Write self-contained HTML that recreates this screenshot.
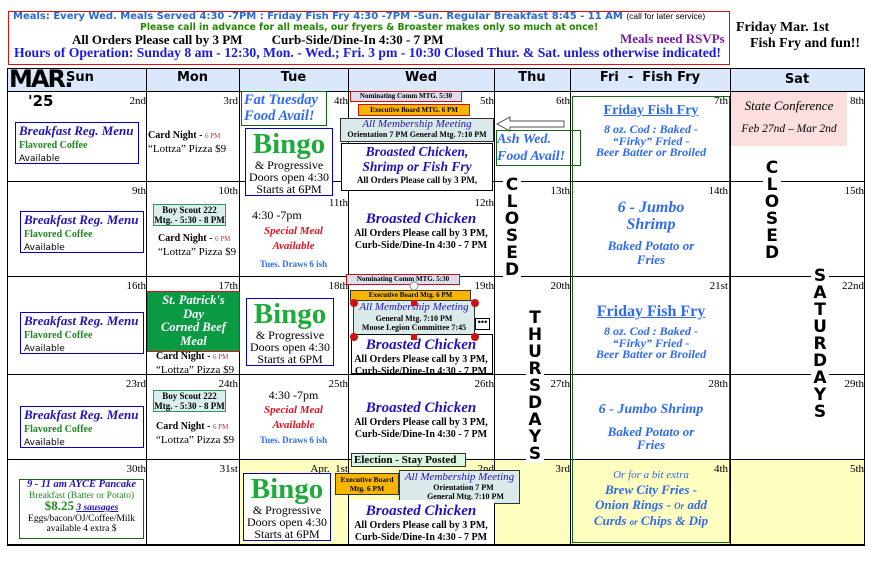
<!DOCTYPE html>
<html><head><meta charset="utf-8"><style>
*{margin:0;padding:0;box-sizing:border-box}
body{width:879px;height:571px;background:#fff;position:relative;overflow:hidden;font-family:"Liberation Serif",serif}
.a{position:absolute}
.c{text-align:center;white-space:nowrap}
.s{font-family:"DejaVu Sans","Liberation Sans",sans-serif}
.hl{position:absolute;height:1px;background:#000}
.vl{position:absolute;width:1px;background:#000}
.hd{position:absolute;top:68px;height:23px;background:#dbe8fb;font:bold 13px "DejaVu Sans",sans-serif;text-align:center;line-height:20px}
.dn{position:absolute;font-size:11px;width:60px;text-align:right}
.bm{position:absolute;border:1px solid #0000cc;background:#fff;padding:1px 3px;line-height:11px}
.bm b.t{font:italic bold 13px "Liberation Serif",serif;color:#2211bb;display:block;line-height:14px}
.bm .g{color:#228822;font:bold 10px "Liberation Serif",serif}
.bm .k{font:9px "DejaVu Sans",sans-serif}
.cn{position:absolute;font-size:10px;font-weight:bold;line-height:13px}
.cn small{font-size:7px;color:#c33;font-weight:normal}
.cn span{font-weight:normal;font-size:11px}
.bingo{position:absolute;border:1px solid #0000cc;background:#fff;text-align:center;line-height:12px;font-size:12px}
.bingo b{display:block;color:#1faa3c;font-size:29px;line-height:30px}
.bc{position:absolute;text-align:center;width:146px;font-size:10px;font-weight:bold;line-height:12px}
.bc i{display:block;color:#2211bb;font-size:15px;line-height:17px}
.v{position:absolute;font:900 17px "DejaVu Sans",sans-serif;line-height:17px;width:18px;text-align:center;background:#fff}
.fb{color:#2f6bf0;font-weight:bold;font-style:italic;text-align:center;position:absolute;width:158px}
</style></head><body>
<!-- top box -->
<div class="a" style="left:8px;top:11px;width:722px;height:54px;border:1px solid #d11"></div>
<div class="a s" style="left:13px;top:11px;font-size:10px;font-weight:bold;color:#2a6ad0;white-space:nowrap">Meals: Every Wed. Meals Served 4:30 -7PM : Friday Fish Fry 4:30 -7PM -Sun. Regular Breakfast 8:45 - 11 AM <span style="font-weight:normal;color:#000;font-family:'Liberation Sans';font-size:8.5px">(call for later service)</span></div>
<div class="a s" style="left:140px;top:22px;font-size:9.3px;font-weight:bold;color:#228800;white-space:nowrap">Please call in advance for all meals, our fryers &amp; Broaster makes only so much at once!</div>
<div class="a" style="left:72px;top:32px;font-size:13px;font-weight:bold;white-space:nowrap">All Orders Please call by 3 PM&nbsp;&nbsp;&nbsp;&nbsp;&nbsp;&nbsp;&nbsp;&nbsp;&nbsp;Curb-Side/Dine-In 4:30 - 7 PM</div>
<div class="a" style="left:620px;top:31px;font-size:13px;font-weight:bold;color:#7a1aa0">Meals need RSVPs</div>
<div class="a" style="left:14px;top:45px;font-size:13.7px;font-weight:bold;color:#1a1ae0;white-space:nowrap">Hours of Operation: Sunday 8 am - 12:30, Mon. - Wed.; Fri. 3 pm - 10:30 Closed Thur. &amp; Sat. unless otherwise indicated!</div>
<div class="a" style="left:736px;top:20px;font-size:14px;font-weight:bold">Friday Mar. 1st</div>
<div class="a" style="left:750px;top:36px;font-size:14px;font-weight:bold">Fish Fry and fun!!</div>

<!-- yellow last row -->
<div class="a" style="left:239px;top:459px;width:625px;height:86px;background:#ffffc0"></div>
<!-- headers -->
<div class="hd" style="left:8px;width:138px;text-align:left;padding-left:58px">Sun</div>
<div class="hd" style="left:146px;width:93px">Mon</div>
<div class="hd" style="left:239px;width:109px">Tue</div>
<div class="hd" style="left:348px;width:146px">Wed</div>
<div class="hd" style="left:494px;width:76px">Thu</div>
<div class="hd" style="left:570px;width:160px">Fri &nbsp;- &nbsp;Fish Fry</div>
<div class="hd" style="left:730px;width:134px;line-height:23px">Sat</div>
<div class="a s" style="left:9px;top:66px;font:900 24px 'DejaVu Sans',sans-serif;letter-spacing:-2px;line-height:26px">MAR.</div>
<div class="a s" style="left:28px;top:92px;font:900 15px 'DejaVu Sans',sans-serif">'25</div>
<!-- grid -->
<div class="hl" style="left:8px;top:68px;width:857px"></div>
<div class="hl" style="left:8px;top:91px;width:857px"></div>
<div class="hl" style="left:8px;top:181px;width:857px"></div>
<div class="hl" style="left:8px;top:276px;width:857px"></div>
<div class="hl" style="left:8px;top:374px;width:857px"></div>
<div class="hl" style="left:8px;top:459px;width:857px"></div>
<div class="hl" style="left:8px;top:544px;width:857px;height:2px"></div>
<div class="vl" style="left:7px;top:68px;height:478px"></div>
<div class="vl" style="left:146px;top:68px;height:478px"></div>
<div class="vl" style="left:239px;top:68px;height:478px"></div>
<div class="vl" style="left:348px;top:68px;height:478px"></div>
<div class="vl" style="left:494px;top:68px;height:478px"></div>
<div class="vl" style="left:570px;top:68px;height:478px"></div>
<div class="vl" style="left:730px;top:68px;height:478px"></div>
<div class="vl" style="left:864px;top:68px;height:478px"></div>
<div class="a" style="left:572px;top:96px;width:158px;height:447px;border:1px solid #116611"></div>

<!-- day numbers -->
<div class="dn" style="left:86px;top:95px">2nd</div><div class="dn" style="left:178px;top:95px">3rd</div><div class="dn" style="left:288px;top:95px">4th</div><div class="dn" style="left:434px;top:95px">5th</div><div class="dn" style="left:510px;top:95px">6th</div><div class="dn" style="left:668px;top:95px">7th</div><div class="dn" style="left:804px;top:95px">8th</div>
<div class="dn" style="left:86px;top:185px">9th</div><div class="dn" style="left:178px;top:185px">10th</div><div class="dn" style="left:288px;top:197px">11th</div><div class="dn" style="left:434px;top:197px">12th</div><div class="dn" style="left:510px;top:185px">13th</div><div class="dn" style="left:668px;top:185px">14th</div><div class="dn" style="left:804px;top:185px">15th</div>
<div class="dn" style="left:86px;top:280px">16th</div><div class="dn" style="left:178px;top:280px">17th</div><div class="dn" style="left:288px;top:280px">18th</div><div class="dn" style="left:434px;top:280px">19th</div><div class="dn" style="left:510px;top:280px">20th</div><div class="dn" style="left:668px;top:280px">21st</div><div class="dn" style="left:804px;top:280px">22nd</div>
<div class="dn" style="left:86px;top:378px">23rd</div><div class="dn" style="left:178px;top:378px">24th</div><div class="dn" style="left:288px;top:378px">25th</div><div class="dn" style="left:434px;top:378px">26th</div><div class="dn" style="left:510px;top:378px">27th</div><div class="dn" style="left:668px;top:378px">28th</div><div class="dn" style="left:804px;top:378px">29th</div>
<div class="dn" style="left:86px;top:463px">30th</div><div class="dn" style="left:178px;top:463px">31st</div><div class="dn" style="left:248px;top:463px;width:100px">Apr. &nbsp;1st</div><div class="dn" style="left:434px;top:463px">2nd</div><div class="dn" style="left:510px;top:463px">3rd</div><div class="dn" style="left:668px;top:463px">4th</div><div class="dn" style="left:804px;top:463px">5th</div>

<!-- Sun -->
<div class="bm" style="left:15px;top:122px;width:124px;height:42px"><b class="t">Breakfast Reg. Menu</b><span class="g">Flavored Coffee</span><br><span class="k">Available</span></div>
<div class="bm" style="left:20px;top:211px;width:124px;height:42px"><b class="t">Breakfast Reg. Menu</b><span class="g">Flavored Coffee</span><br><span class="k">Available</span></div>
<div class="bm" style="left:20px;top:312px;width:124px;height:42px"><b class="t">Breakfast Reg. Menu</b><span class="g">Flavored Coffee</span><br><span class="k">Available</span></div>
<div class="bm" style="left:20px;top:406px;width:124px;height:42px"><b class="t">Breakfast Reg. Menu</b><span class="g">Flavored Coffee</span><br><span class="k">Available</span></div>
<div class="a c" style="left:19px;top:479px;width:125px;height:60px;border:1px solid #116611;background:#fff;line-height:10.5px;font-size:9.5px">
<i style="color:#2211bb;font-weight:bold;font-size:10.5px">9 - 11 am AYCE Pancake</i><br><span style="color:#228822">Breakfast (Batter or Potato)</span><br><b style="color:#228822;font-size:13px">$8.25</b> <i style="color:#2211bb;text-decoration:underline;font-weight:bold">3 sausages</i><br>Eggs/bacon/OJ/Coffee/Milk<br>available 4 extra $</div>

<!-- Mon -->
<div class="cn" style="left:148px;top:129px">Card Night - <small>6 PM</small><br><span>“Lottza” Pizza $9</span></div>
<div class="a c" style="left:153px;top:204px;width:73px;height:22px;border:1px solid #2a9a5a;background:#daeeee;font-size:9px;font-weight:bold;line-height:10px">Boy Scout 222<br>Mtg. - 5:30 - 8 PM</div>
<div class="cn" style="left:158px;top:232px">Card Night - <small>6 PM</small><br><span>“Lottza” Pizza $9</span></div>
<div class="a c" style="left:147px;top:291px;width:93px;height:61px;background:#0a9a44;border:1px solid #d11;color:#fff;font:italic bold 12.5px 'Liberation Serif',serif;line-height:13.5px;padding-top:2px">St. Patrick's<br>Day<br>Corned Beef<br>Meal</div>
<div class="cn" style="left:156px;top:350px">Card Night - <small>6 PM</small><br><span>“Lottza” Pizza $9</span></div>
<div class="a c" style="left:153px;top:390px;width:73px;height:22px;border:1px solid #2a9a5a;background:#daeeee;font-size:9px;font-weight:bold;line-height:10px">Boy Scout 222<br>Mtg. - 5:30 - 8 PM</div>
<div class="cn" style="left:156px;top:420px">Card Night - <small>6 PM</small><br><span>“Lottza” Pizza $9</span></div>

<!-- Tue -->
<div class="a" style="left:241px;top:91px;width:86px;height:35px;border:1px solid #116611;background:#fff;color:#2f6bf0;font:italic bold 14.5px 'Liberation Serif',serif;line-height:16px;padding-left:2px">Fat Tuesday<br>Food Avail!</div>
<div class="bingo" style="left:245px;top:128px;width:88px;height:68px"><b>Bingo</b>&amp; Progressive<br>Doors open 4:30<br>Starts at 6PM</div>
<div class="a c" style="left:239px;top:208px;width:109px;font-size:12px;line-height:14px;text-align:left;padding-left:13px">4:30 -7pm</div>
<div class="a c" style="left:239px;top:224px;width:109px;font:italic bold 11px 'Liberation Serif',serif;color:#e0141e;line-height:15px">Special Meal<br>Available</div>
<div class="a c" style="left:239px;top:259px;width:109px;font-size:9px;color:#2f6bf0;font-weight:bold">Tues. Draws 6 ish</div>
<div class="bingo" style="left:246px;top:298px;width:88px;height:68px"><b>Bingo</b>&amp; Progressive<br>Doors open 4:30<br>Starts at 6PM</div>
<div class="a c" style="left:239px;top:388px;width:109px;font-size:12px;line-height:14px">4:30 -7pm</div>
<div class="a c" style="left:239px;top:403px;width:109px;font:italic bold 11px 'Liberation Serif',serif;color:#e0141e;line-height:15px">Special Meal<br>Available</div>
<div class="a c" style="left:239px;top:435px;width:109px;font-size:9px;color:#2f6bf0;font-weight:bold">Tues. Draws 6 ish</div>
<div class="bingo" style="left:243px;top:473px;width:88px;height:68px"><b>Bingo</b>&amp; Progressive<br>Doors open 4:30<br>Starts at 6PM</div>

<!-- Wed -->
<div class="a c" style="left:350px;top:91px;width:112px;height:11px;border:1px solid #c11;background:#dde;font-size:7px;font-weight:bold;line-height:9px">Nominating Comm MTG. 5:30</div>
<div class="a c" style="left:358px;top:104px;width:112px;height:12px;border:1px solid #c11;background:#f7b500;font-size:7px;font-weight:bold;line-height:10px">Executive Board MTG. 6 PM</div>
<div class="a c" style="left:340px;top:118px;width:154px;height:24px;border:1px solid #333;background:#daeaea;font-size:8px;font-weight:bold;line-height:10px"><i style="color:#2211bb;font-size:11px;font-weight:normal">All Membership Meeting</i><br>Orientation 7 PM General Mtg. 7:10 PM</div>
<div class="a" style="left:496px;top:116px;width:70px;height:16px"><svg width="70" height="16"><path d="M1 8 L14 1 L14 5 L68 5 L68 11 L14 11 L14 15 Z" fill="#fff" stroke="#555"/></svg></div>
<div class="a" style="left:341px;top:143px;width:152px;height:48px;border:1px solid #000;background:#fff;text-align:center;font-size:9px;font-weight:bold;line-height:12px"><i style="color:#2211bb;font-size:13.5px;line-height:15px;display:block">Broasted Chicken,<br>Shrimp or Fish Fry</i>All Orders Please call by 3 PM,</div>
<div class="a" style="left:496px;top:130px;width:85px;height:36px;border:1px solid #116611;color:#2f6bf0;font:italic bold 14px 'Liberation Serif',serif;line-height:17px">Ash Wed.<br>Food Avail!</div>
<div class="bc" style="left:348px;top:211px"><i>Broasted Chicken</i>All Orders Please call by 3 PM,<br>Curb-Side/Dine-In 4:30 - 7 PM</div>

<div class="a c" style="left:346px;top:274px;width:114px;height:11px;border:1px solid #c11;background:#dde;font-size:7px;font-weight:bold;line-height:9px">Nominating Comm MTG. 5:30</div>
<div class="a c" style="left:350px;top:290px;width:121px;height:11px;border:1px solid #333;background:#f7b500;font-size:7px;font-weight:bold;line-height:9px">Executive Board Mtg. 6 PM</div>
<div class="a c" style="left:353px;top:300px;width:122px;height:36px;border:1px solid #333;background:#daeaea;font-size:8px;font-weight:bold;line-height:9px"><i style="color:#2211bb;font-size:11px;font-weight:normal;line-height:13px">All Membership Meeting</i><br>General Mtg. 7:10 PM<br>Moose Legion Committee 7:45</div>
<div class="a" style="left:475px;top:318px;width:15px;height:12px;border:1px solid #000;background:#fff;font-size:9px;line-height:7px;text-align:center;font-weight:bold">•••</div>
<div class="a" style="left:351px;top:334px;width:142px;height:40px;border:1px solid #000;background:#fff"></div>
<div class="bc" style="left:348px;top:337px"><i>Broasted Chicken</i>All Orders Please call by 3 PM,<br>Curb-Side/Dine-In 4:30 - 7 PM</div>
<svg class="a" style="left:348px;top:275px" width="140" height="70"><g fill="#c11"><circle cx="6" cy="28" r="4"/><circle cx="127" cy="28" r="4"/><circle cx="6" cy="62" r="4"/><circle cx="127" cy="62" r="4"/><rect x="63" y="25" width="6" height="6"/><rect x="63" y="59" width="6" height="6"/></g><circle cx="66" cy="11" r="4" fill="#fff" stroke="#888"/></svg>
<div class="bc" style="left:348px;top:400px"><i>Broasted Chicken</i>All Orders Please call by 3 PM,<br>Curb-Side/Dine-In 4:30 - 7 PM</div>

<div class="a" style="left:351px;top:453px;width:115px;height:14px;border:1px solid #333;background:#d8f6e0;font-size:11px;font-weight:bold;line-height:12px;padding-left:2px">Election - Stay Posted</div>
<div class="a c" style="left:335px;top:473px;width:64px;height:22px;border:1px solid #333;background:#f7b500;font-size:7.5px;font-weight:bold;line-height:9px;padding-top:1px">Executive Board<br>Mtg. 6 PM</div>
<div class="a c" style="left:399px;top:470px;width:121px;height:34px;border:1px solid #333;background:#daeaea;font-size:8px;font-weight:bold;line-height:9px"><i style="color:#2211bb;font-size:11px;font-weight:normal;line-height:12px">All Membership Meeting</i><br>&nbsp;&nbsp;&nbsp;&nbsp;Orientation 7 PM<br>&nbsp;&nbsp;&nbsp;&nbsp;&nbsp;&nbsp;General Mtg. 7:10 PM</div>
<div class="a" style="left:350px;top:500px;width:144px;height:44px;background:#fff"></div>
<div class="bc" style="left:348px;top:503px"><i>Broasted Chicken</i>All Orders Please call by 3 PM,<br>Curb-Side/Dine-In 4:30 - 7 PM</div>

<!-- Thu / Sat vertical -->
<div class="v" style="left:503px;top:177px">C<br>L<br>O<br>S<br>E<br>D</div>
<div class="v" style="left:526px;top:310px">T<br>H<br>U<br>R<br>S<br>D<br>A<br>Y<br>S</div>
<div class="v" style="left:763px;top:160px">C<br>L<br>O<br>S<br>E<br>D</div>
<div class="v" style="left:811px;top:268px">S<br>A<br>T<br>U<br>R<br>D<br>A<br>Y<br>S</div>

<!-- Fri -->
<div class="a c" style="left:572px;top:103px;width:158px;font-size:14px;font-weight:bold;color:#2f6bf0;text-decoration:underline">Friday Fish Fry</div>
<div class="fb" style="left:572px;top:124px;font-size:12px;line-height:11.5px">8 oz. Cod : Baked -<br>“Firky” Fried -<br>Beer Batter or Broiled</div>
<div class="fb" style="left:572px;top:199px;font-size:16px;line-height:17px">6 - Jumbo<br>Shrimp</div>
<div class="fb" style="left:572px;top:239px;font-size:13px;line-height:14px">Baked Potato or<br>Fries</div>
<div class="a c" style="left:572px;top:303px;width:158px;font-size:16px;font-weight:bold;color:#2f6bf0;text-decoration:underline">Friday Fish Fry</div>
<div class="fb" style="left:572px;top:326px;font-size:12px;line-height:11.5px">8 oz. Cod : Baked -<br>“Firky” Fried -<br>Beer Batter or Broiled</div>
<div class="fb" style="left:572px;top:401px;font-size:14px;line-height:17px">6 - Jumbo Shrimp</div>
<div class="fb" style="left:572px;top:425px;font-size:13px;line-height:13px">Baked Potato or<br>Fries</div>
<div class="fb" style="left:572px;top:469px;font-size:11px;line-height:13.5px"><span style="font-weight:normal">Or for a bit extra</span><br><span style="font-size:13px">Brew City Fries -<br>Onion Rings - <small style="font-size:9px">Or</small> add<br>Curds <small style="font-size:9px">or</small> Chips &amp; Dip</span></div>

<!-- Sat -->
<div class="a c" style="left:731px;top:92px;width:116px;height:54px;background:#fcdede;font:italic 13px 'Liberation Serif',serif;line-height:22px;padding-top:3px">State Conference<br><span style="font-size:11.5px">Feb 27nd – Mar 2nd</span></div>
</body></html>
